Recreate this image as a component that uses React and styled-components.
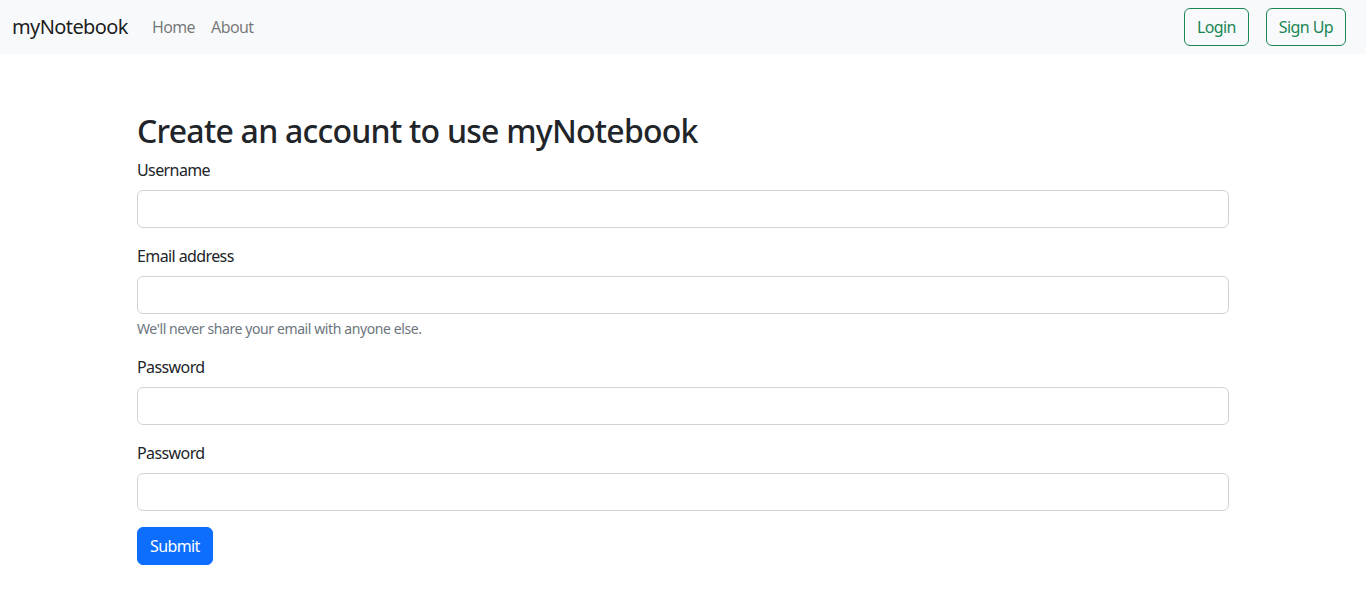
import React from 'react'
import styled, { createGlobalStyle } from 'styled-components'

const GlobalStyle = createGlobalStyle`
  * { box-sizing: border-box; }
  body {
    margin: 0;
    font-family: "Noto Sans", "Liberation Sans", sans-serif;
    font-size: 16px;
    line-height: 1.5;
    letter-spacing: -0.6px;
    color: #212529;
    background: #fff;
  }
`

const Navbar = styled.nav`
  height: 54px;
  background: #f8f9fa;
  display: flex;
  align-items: center;
  justify-content: space-between;
  padding: 0 20px 0 12px;
`

const NavLeft = styled.div`
  display: flex;
  align-items: center;
`

const Brand = styled.a`
  font-size: 20px;
  color: rgba(0, 0, 0, 0.9);
  text-decoration: none;
  margin-right: 16px;
`

const NavLink = styled.a`
  padding: 0 8px;
  color: rgba(0, 0, 0, 0.55);
  text-decoration: none;
`

const NavRight = styled.div`
  display: flex;
  gap: 17px;
`

const OutlineButton = styled.button`
  font: inherit;
  letter-spacing: inherit;
  height: 38px;
  padding: 0 12px;
  color: #198754;
  background: transparent;
  border: 1px solid #198754;
  border-radius: 6px;
  cursor: pointer;
`

const Container = styled.main`
  max-width: 1116px;
  margin: 0 auto;
  padding: 58px 12px 0;
`

const Title = styled.h2`
  margin: 0 0 8px;
  font-size: 32px;
  font-weight: 500;
  line-height: 1.2;
  letter-spacing: -0.75px;
`

const Field = styled.div`
  margin-bottom: 16px;
`

const Label = styled.label`
  display: block;
  margin-bottom: 8px;
`

const Input = styled.input`
  display: block;
  width: 100%;
  height: 38px;
  padding: 6px 12px;
  font: inherit;
  border: 1px solid #ced4da;
  border-radius: 6px;
  background: #fff;
`

const HelpText = styled.div`
  margin-top: 4px;
  font-size: 14px;
  letter-spacing: -0.4px;
  color: #6c757d;
`

const SubmitButton = styled.button`
  font: inherit;
  letter-spacing: inherit;
  height: 38px;
  padding: 0 12px;
  color: #fff;
  background: #0d6efd;
  border: 1px solid #0d6efd;
  border-radius: 6px;
  cursor: pointer;
`

export default function App() {
  return (
    <>
      <GlobalStyle />
      <Navbar>
        <NavLeft>
          <Brand href="#">myNotebook</Brand>
          <NavLink href="#">Home</NavLink>
          <NavLink href="#">About</NavLink>
        </NavLeft>
        <NavRight>
          <OutlineButton>Login</OutlineButton>
          <OutlineButton>Sign Up</OutlineButton>
        </NavRight>
      </Navbar>
      <Container>
        <Title>Create an account to use myNotebook</Title>
        <form onSubmit={e => e.preventDefault()}>
          <Field>
            <Label htmlFor="name">Username</Label>
            <Input id="name" type="text" />
          </Field>
          <Field>
            <Label htmlFor="email">Email address</Label>
            <Input id="email" type="email" />
            <HelpText>We'll never share your email with anyone else.</HelpText>
          </Field>
          <Field>
            <Label htmlFor="password">Password</Label>
            <Input id="password" type="password" />
          </Field>
          <Field>
            <Label htmlFor="cpassword">Password</Label>
            <Input id="cpassword" type="password" />
          </Field>
          <SubmitButton type="submit">Submit</SubmitButton>
        </form>
      </Container>
    </>
  )
}
